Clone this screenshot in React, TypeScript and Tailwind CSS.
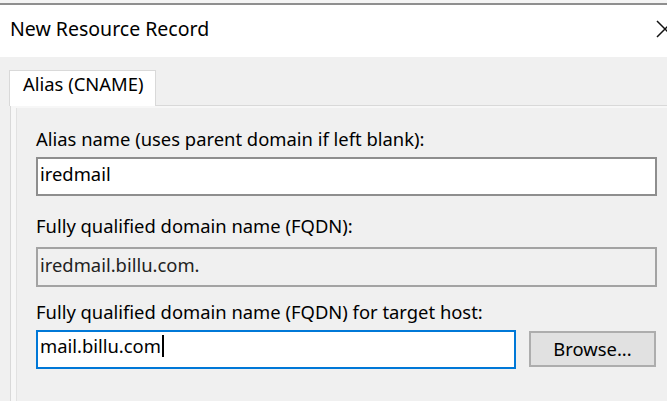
import React from 'react';

const font = { fontFamily: '"Noto Sans", "Open Sans", Arial, sans-serif' };

function Label({ children, className = '' }: { children: React.ReactNode; className?: string }) {
  return <div className={`h-[24px] leading-[24px] text-[18.4px] text-black whitespace-nowrap ${className}`}>{children}</div>;
}

export default function App() {
  return (
    <div className="w-[667px] h-[401px] overflow-hidden bg-[#f0f0f0] relative" style={font}>
      {/* window frame + title bar */}
      <div className="h-[3px] bg-[#f4f4f4]" />
      <div className="h-[2px] bg-[#8f8f8f]" />
      <div className="h-[52px] bg-white pl-[10px] pt-[12px] relative">
        <div className="h-[24px] leading-[24px] text-[19.5px] text-black whitespace-nowrap">New Resource Record</div>
        <svg className="absolute left-[656px] top-[15px]" width="18" height="18" viewBox="0 0 18 18">
          <path d="M1 1 L17 17 M17 1 L1 17" stroke="#111" strokeWidth="1.5" fill="none" />
        </svg>
      </div>

      {/* tab control */}
      <div className="pl-[9px] pt-[13px]">
        <div className="relative z-10 w-[147px] h-[36px] -mb-[1px] bg-white border border-b-0 border-[#d9d9d9] pl-[13px] pt-[1px]">
          <div className="h-[24px] leading-[24px] text-[18.4px] text-black whitespace-nowrap">Alias (CNAME)</div>
        </div>
        <div className="ml-[1px] w-[700px] h-[320px] border border-[#d9d9d9]">
          <div className="h-full border-t-2 border-l-[5px] border-[#f7f7f7]">
            <div className="h-full border-l border-[#e2e2e2] pl-[19px] pt-[19px]">
              <Label>Alias name (uses parent domain if left blank):</Label>
              <div className="mt-[6px] w-[621px] h-[39px] box-border border-2 border-[#8e8e8e] bg-white pl-[2px] pt-[3px]">
                <div className="h-[24px] leading-[24px] text-[18.4px] text-black">iredmail</div>
              </div>

              <Label className="mt-[18px]">Fully qualified domain name (FQDN):</Label>
              <div className="mt-[9px] w-[621px] h-[40px] box-border border-2 border-[#a3a3a3] bg-[#f0f0f0] pl-[2px] pt-[4px]">
                <div className="h-[24px] leading-[24px] text-[18.4px] text-[#222]">iredmail.billu.com.</div>
              </div>

              <Label className="mt-[13px]">Fully qualified domain name (FQDN) for target host:</Label>
              <div className="mt-[6px] flex items-start gap-[13px]">
                <div className="w-[480px] h-[39px] box-border border-2 border-[#0078d7] bg-white pl-[2px] pt-[2px] flex">
                  <div className="h-[24px] leading-[24px] text-[18.4px] text-black">mail.billu.com</div>
                  <div className="ml-[1px] mt-[1px] w-[2px] h-[22px] bg-black" />
                </div>
                <div className="mt-[1px] w-[127px] h-[36px] box-border border-2 border-[#adadad] bg-[#e1e1e1] flex items-center justify-center">
                  <span className="leading-[24px] text-[18.4px] text-black">Browse...</span>
                </div>
              </div>
            </div>
          </div>
        </div>
      </div>
    </div>
  );
}
